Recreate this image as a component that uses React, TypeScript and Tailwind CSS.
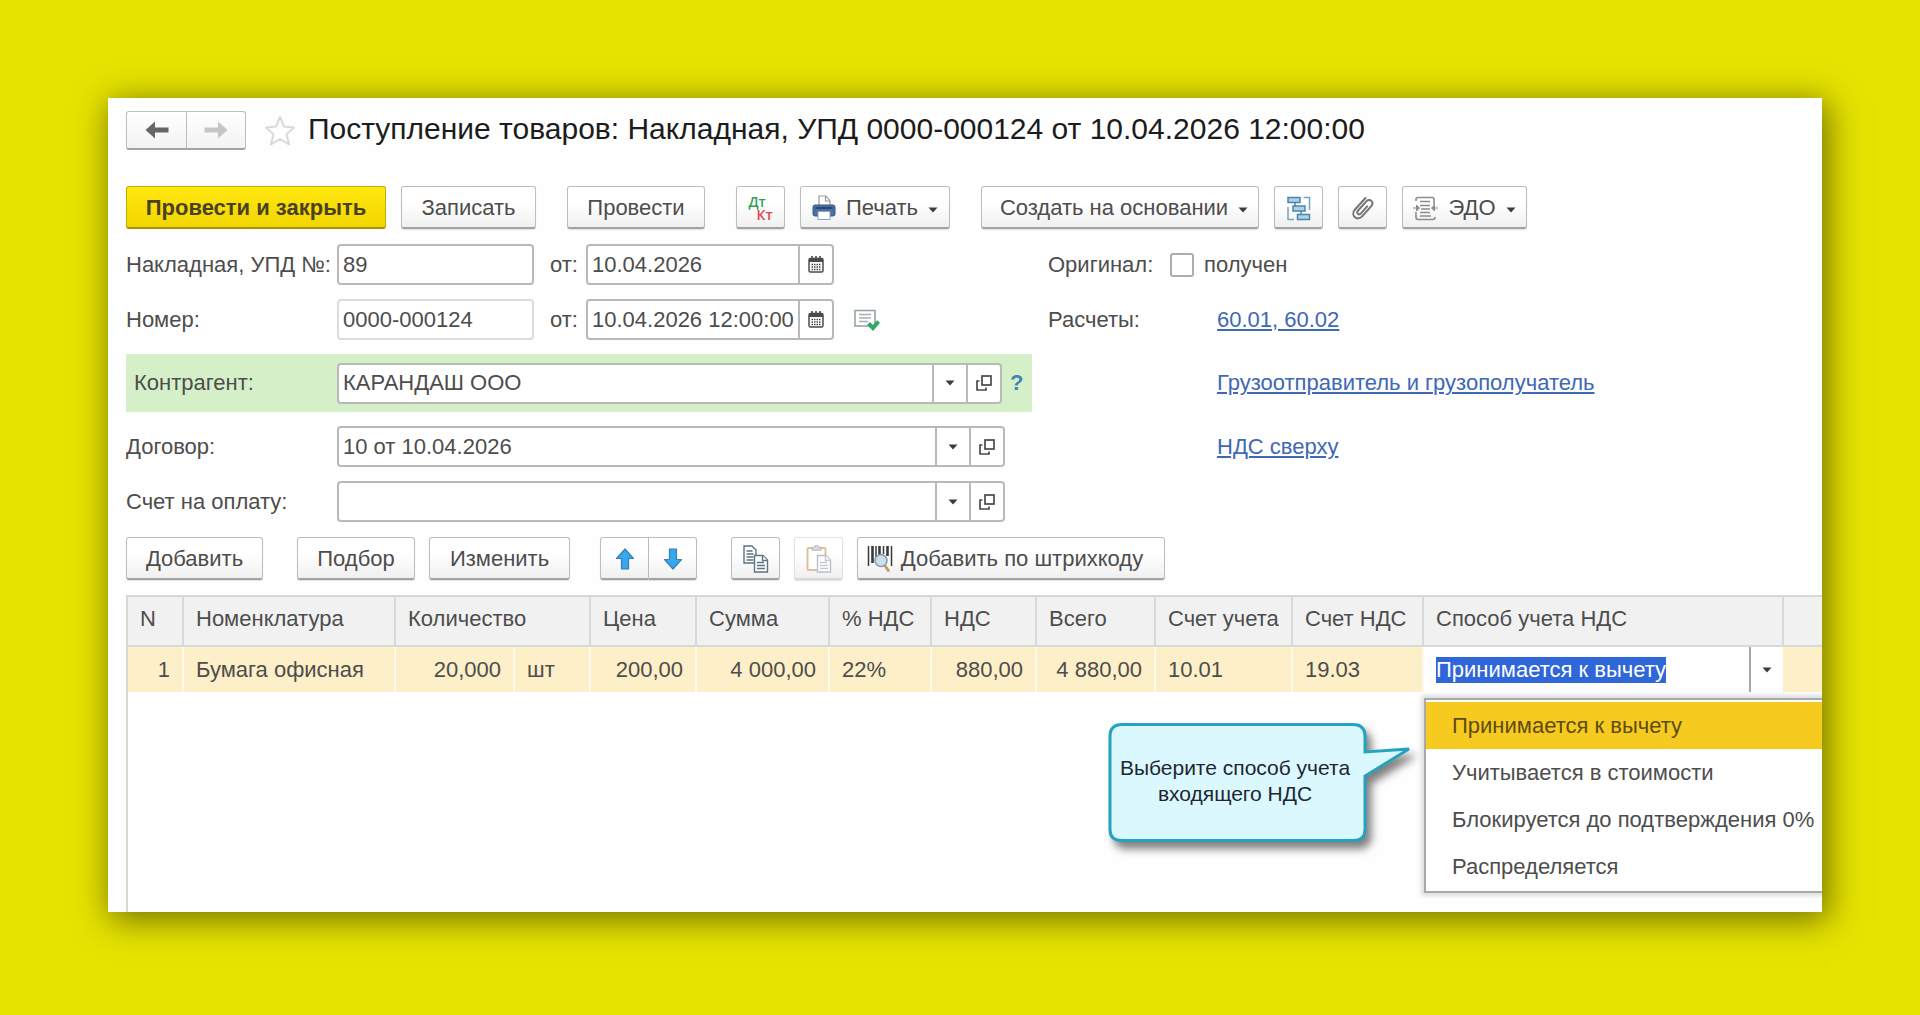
import { useEffect, useRef, type ReactNode } from "react";
import { clsx } from "clsx";

const columns = [
  { title: "N", width: "w-[55px]" },
  { title: "Номенклатура", width: "w-[212px]" },
  { title: "Количество", width: "w-[119px]", span: 2 },
  { title: "Цена", width: "w-[106px]" },
  { title: "Сумма", width: "w-[133px]" },
  { title: "% НДС", width: "w-[102px]" },
  { title: "НДС", width: "w-[105px]" },
  { title: "Всего", width: "w-[119px]" },
  { title: "Счет учета", width: "w-[137px]" },
  { title: "Счет НДС", width: "w-[131px]" },
  { title: "Способ учета НДС", width: "w-[360px]" },
  { title: "", width: "" },
];

const cells = [
  { value: "1", right: true },
  { value: "Бумага офисная" },
  { value: "20,000", right: true },
  { value: "шт" },
  { value: "200,00", right: true },
  { value: "4 000,00", right: true },
  { value: "22%" },
  { value: "880,00", right: true },
  { value: "4 880,00", right: true },
  { value: "10.01" },
  { value: "19.03" },
];

const vatMethods = [
  "Принимается к вычету",
  "Учитывается в стоимости",
  "Блокируется до подтверждения 0%",
  "Распределяется",
];

/* ---------- icons ---------- */

function Caret({ className }: { className?: string }) {
  return (
    <svg width="10" height="6" viewBox="0 0 10 6" className={clsx("shrink-0", className)} aria-hidden="true">
      <path d="M0.5 0.5h9L5 5.5z" fill="#3c3c3c" />
    </svg>
  );
}

function ArrowIcon({ right }: { right?: boolean }) {
  return (
    <svg width="24" height="18" viewBox="0 0 24 18" className={right ? "rotate-180" : ""} aria-hidden="true">
      <path d="M0.5 9L10 0.5v6h13.500v5H10v6z" fill={right ? "#c6c6c6" : "#666"} />
    </svg>
  );
}

function StarIcon() {
  return (
    <svg width="32" height="32" viewBox="0 0 32 32" aria-hidden="true">
      <path
        d="M16 2l4 9.500 10 1-7.500 6.800 2.500 10.200L16 24l-9 5.500 2.500-10.200L2 12.500l10-1z"
        fill="#fff"
        stroke="#d9d9d9"
        strokeWidth="2"
        strokeLinejoin="round"
      />
    </svg>
  );
}

function PrinterIcon() {
  return (
    <svg width="24" height="26" viewBox="0 0 24 26" aria-hidden="true">
      <path d="M7 11V1h7l4 5v5" fill="#fff" stroke="#9a9a9a" strokeWidth="1.200" />
      <path d="M13.500 1v5H18" fill="none" stroke="#9a9a9a" strokeWidth="1.200" />
      <rect x="1" y="10" width="22" height="11" rx="2" fill="#4a70a2" stroke="#34568a" />
      <rect x="3.500" y="12" width="17" height="2" fill="#2c4770" />
      <rect x="6" y="16.500" width="12" height="8" fill="#fff" stroke="#8ea3bd" />
    </svg>
  );
}

function StructureIcon() {
  return (
    <svg width="25" height="25" viewBox="0 0 25 25" fill="none" stroke="#4f83a8" strokeWidth="1.500" aria-hidden="true">
      <rect x="2" y="1.500" width="12" height="5" fill="#a9d5ec" />
      <rect x="7" y="10" width="12" height="5" fill="#a9d5ec" />
      <rect x="11.500" y="18.500" width="12" height="5" fill="#a9d5ec" />
      <path d="M9 6.500V10M15 15v3.500" />
      <path d="M17.500 1.500h6V14M2 11v12.500h6" stroke="#7aa3c0" />
    </svg>
  );
}

function ClipIcon() {
  return (
    <svg width="24" height="25" viewBox="0 0 24 25" fill="none" stroke="#757575" strokeWidth="2" strokeLinecap="round" aria-hidden="true">
      <path d="M14.500 2L4 13.500c-2.200 2.600-2.200 5.800-.3 7.600 2 1.900 5.200 1.700 7.400-.7l9-10c1.700-2 1.700-4.200.3-5.500-1.500-1.400-3.700-1.100-5.300.7l-8 8.900c-1 1.200-1 2.500-.2 3.300.9.800 2.100.6 3.100-.5l6.200-6.900" />
    </svg>
  );
}

function EdoIcon() {
  return (
    <svg width="25" height="25" viewBox="0 0 25 25" fill="none" stroke="#8c8c8c" strokeWidth="1.600" aria-hidden="true">
      <path d="M3 5V3.500C3 2 4 1.500 5 1.500h14.500c1.500 0 1.500 1 1.500 2V9M3 16v5c0 1.500 1 2.500 2 2.500h15c1.500 0 2-1 2-2.500" />
      <path d="M7 5.500h10M7 9.500h10M8 13h9M7 16.500h10M7 20h11" />
      <path d="M0 12h4M3.500 9v6l3-3zM25 12h-4M21.500 9v6l-3-3z" fill="#8c8c8c" strokeWidth="1" />
    </svg>
  );
}

function CalendarIcon() {
  return (
    <svg width="16" height="17" viewBox="0 0 16 17" aria-hidden="true">
      <rect x="1" y="2.500" width="14" height="13.500" rx="1.500" fill="#fff" stroke="#4a4a4a" strokeWidth="1.500" />
      <path d="M1 2.500h14V6H1z" fill="#4a4a4a" />
      <path d="M4 0v3M8 0v3M12 0v3" stroke="#4a4a4a" strokeWidth="1.600" />
      <path d="M3.500 8.500h9M3.500 11h9M3.500 13.500h9" stroke="#4a4a4a" strokeWidth="1.400" strokeDasharray="1.500 1" />
    </svg>
  );
}

function OpenIcon() {
  return (
    <svg width="16" height="16" viewBox="0 0 16 16" fill="none" stroke="#4a4a4a" strokeWidth="1.700" aria-hidden="true">
      <rect x="6" y="1" width="9" height="9" />
      <path d="M3.500 6H1v9h9v-2.500" />
    </svg>
  );
}

function PostedIcon() {
  return (
    <svg width="26" height="22" viewBox="0 0 26 22" fill="none" aria-hidden="true">
      <rect x="1" y="1.500" width="20" height="15.500" fill="#fff" stroke="#93a0a4" strokeWidth="1.500" />
      <path d="M5 5.500h12M5 9h12M5 12.500h9" stroke="#a5b0b4" strokeWidth="1.500" />
      <path d="M14.500 14.500l4.500 4.500 5.500-6.500" stroke="#2fa866" strokeWidth="4" />
    </svg>
  );
}

function MoveIcon({ down }: { down?: boolean }) {
  return (
    <svg width="20" height="22" viewBox="0 0 20 22" className={down ? "rotate-180" : ""} aria-hidden="true">
      <path d="M10 1l8.500 9.500H13.500V21h-7V10.500H1.500z" fill="#35a8ee" stroke="#3b7faf" strokeWidth="1.200" strokeLinejoin="round" />
    </svg>
  );
}

function CopyIcon() {
  return (
    <svg width="26" height="28" viewBox="0 0 26 28" fill="#fff" stroke="#5d7380" strokeWidth="1.400" aria-hidden="true">
      <path d="M1 1h8l4 4v13H1z" />
      <path d="M3.500 6h6M3.500 9h7M3.500 12h7M3.500 15h7" />
      <path d="M11.500 10.500h8.500l4.500 4.500v12h-13z" />
      <path d="M19.500 10.500v5h5M14 17.500h7M14 20.500h8M14 23.500h8" />
    </svg>
  );
}

function PasteIcon() {
  return (
    <svg width="26" height="28" viewBox="0 0 26 28" fill="#fff" strokeWidth="1.400" aria-hidden="true">
      <rect x="1.500" y="3" width="18" height="22" rx="1" stroke="#dcc29c" strokeWidth="2" />
      <path d="M6 5V2.500h2.500a2 2 0 014 0H15V5z" fill="#e3dfe8" stroke="#c5c0ca" />
      <path d="M11.500 10.500h8.500l4.500 4.500v12h-13z" stroke="#b9bfc4" />
      <path d="M19.500 10.500v5h5M14 17.500h7M14 20.500h8M14 23.500h8" stroke="#c4cace" />
    </svg>
  );
}

function BarcodeIcon() {
  return (
    <svg width="26" height="28" viewBox="0 0 26 28" fill="none" aria-hidden="true">
      <path d="M1.500 1v20M9 1v13M16.500 1v8M24.500 1v20" stroke="#3a3a3a" strokeWidth="1.500" />
      <path d="M5.500 1v17M12.500 1v9M20.500 1v10" stroke="#3a3a3a" strokeWidth="2.600" />
      <path d="M17.500 20l4.500 6.500" stroke="#c79a72" strokeWidth="3" />
      <circle cx="14" cy="15.500" r="6" fill="#c9dfec" stroke="#8d979d" strokeWidth="1.500" />
    </svg>
  );
}

/* ---------- controls ---------- */

type ButtonProps = {
  children: ReactNode;
  className?: string;
  label?: string;
  disabled?: boolean;
};

function ToolButton({ children, className, label, disabled }: ButtonProps) {
  return (
    <button
      type="button"
      aria-label={label}
      disabled={disabled}
      className={clsx(
        "flex h-[43px] shrink-0 items-center justify-center rounded-[3px] border border-b-2 border-[#bdbdbd] border-b-[#a3a3a3] bg-linear-to-b from-white from-40% to-[#f0f0f0] pt-0.5 whitespace-nowrap shadow-[0_1px_1px_rgba(0,0,0,0.12)]",
        className,
      )}
    >
      {children}
    </button>
  );
}

function FieldBox({ children, className }: { children: ReactNode; className?: string }) {
  return (
    <div
      className={clsx(
        "flex h-[41px] overflow-hidden rounded-[4px] border-2 bg-white",
        className,
      )}
    >
      {children}
    </div>
  );
}

function FieldInput({ id, value }: { id: string; value: string }) {
  return (
    <input
      id={id}
      defaultValue={value}
      className="h-full w-full min-w-0 flex-1 bg-transparent pl-1 outline-none"
    />
  );
}

function FieldButton({ children, label }: { children: ReactNode; label: string }) {
  return (
    <button
      type="button"
      aria-label={label}
      className="flex w-[34px] shrink-0 items-center justify-center border-l-2 border-[#b9b9b9]"
    >
      {children}
    </button>
  );
}

function PickerField({ id, value }: { id: string; value: string }) {
  return (
    <FieldBox className="min-w-0 flex-1 border-[#b9b9b9]">
      <FieldInput id={id} value={value} />
      <FieldButton label="Выбрать">
        <Caret />
      </FieldButton>
      <FieldButton label="Открыть">
        <OpenIcon />
      </FieldButton>
    </FieldBox>
  );
}

function FieldLink({ children }: { children: string }) {
  return (
    <a href="#" className="text-[#3f68b5] underline decoration-2 underline-offset-2">
      {children}
    </a>
  );
}

/* ---------- sections ---------- */

function TitleBar() {
  return (
    <div className="flex h-[39px] items-center">
      <div className="flex h-full rounded-[3px] border border-b-2 border-[#bdbdbd] border-b-[#a3a3a3] bg-linear-to-b from-white to-[#f3f3f3]">
        <button type="button" aria-label="Назад" className="flex w-[60px] items-center justify-center border-r border-[#bdbdbd]">
          <ArrowIcon />
        </button>
        <button type="button" aria-label="Вперед" disabled className="flex w-[58px] items-center justify-center">
          <ArrowIcon right />
        </button>
      </div>
      <button type="button" aria-label="В избранное" className="ml-[18px]">
        <StarIcon />
      </button>
      <h1 className="ml-3 pb-1 text-[30px] leading-9 whitespace-nowrap text-[#1c1c1c]">
        Поступление товаров: Накладная, УПД 0000-000124 от 10.04.2026 12:00:00
      </h1>
    </div>
  );
}

function CommandBar() {
  return (
    <div className="mt-9 flex gap-[15px]">
      <button
        type="button"
        className="h-[43px] w-[260px] shrink-0 rounded-[3px] border border-b-2 border-[#c4ad00] border-b-[#a89400] bg-linear-to-b from-[#ffe80f] to-[#f2d500] pt-0.5 font-bold whitespace-nowrap text-[#4a4125]"
      >
        Провести и закрыть
      </button>
      <ToolButton className="w-[135px]">Записать</ToolButton>
      <ToolButton className="ml-4 w-[138px]">Провести</ToolButton>
      <ToolButton className="ml-4 w-[49px]">
        <span className="flex flex-col font-['Open_Sans',sans-serif] text-[14px] leading-[13px] font-semibold">
          <span className="text-left text-[#2fa257]">Дт</span>
          <span className="pl-2 text-[#e04545]">Кт</span>
        </span>
      </ToolButton>
      <ToolButton className="w-[150px] gap-[10px]">
        <PrinterIcon />
        Печать
        <Caret className="mt-1" />
      </ToolButton>
      <ToolButton className="ml-4 w-[278px] gap-[10px] pl-2">
        Создать на основании
        <Caret className="mt-1" />
      </ToolButton>
      <ToolButton className="w-[49px]" label="Структура подчиненности">
        <StructureIcon />
      </ToolButton>
      <ToolButton className="w-[49px]" label="Присоединенные файлы">
        <ClipIcon />
      </ToolButton>
      <ToolButton className="w-[125px] gap-[10px]">
        <EdoIcon />
        ЭДО
        <Caret className="mt-1" />
      </ToolButton>
    </div>
  );
}

function HeaderFields() {
  return (
    <div className="mt-[15px] grid grid-cols-[906px_1fr] items-center gap-x-4 gap-y-[14px]">
      <div className="flex items-center">
        <label htmlFor="invoice" className="w-[211px] shrink-0 whitespace-nowrap">
          Накладная, УПД №:
        </label>
        <FieldBox className="w-[197px] border-[#b9b9b9]">
          <FieldInput id="invoice" value="89" />
        </FieldBox>
        <label htmlFor="invoice-date" className="w-[52px] pl-4">
          от:
        </label>
        <FieldBox className="w-[248px] border-[#b9b9b9]">
          <FieldInput id="invoice-date" value="10.04.2026" />
          <FieldButton label="Календарь">
            <CalendarIcon />
          </FieldButton>
        </FieldBox>
      </div>
      <div className="flex items-center">
        <span className="w-[122px]">Оригинал:</span>
        <label className="flex items-center gap-[10px]">
          <input type="checkbox" className="size-6 appearance-none rounded-[3px] border-2 border-[#adadad] bg-white" />
          получен
        </label>
      </div>

      <div className="flex items-center">
        <label htmlFor="number" className="w-[211px] shrink-0">
          Номер:
        </label>
        <FieldBox className="w-[197px] border-[#dcdcdc]">
          <FieldInput id="number" value="0000-000124" />
        </FieldBox>
        <label htmlFor="number-date" className="w-[52px] pl-4">
          от:
        </label>
        <FieldBox className="w-[248px] border-[#b9b9b9]">
          <FieldInput id="number-date" value="10.04.2026 12:00:00" />
          <FieldButton label="Календарь">
            <CalendarIcon />
          </FieldButton>
        </FieldBox>
        <span className="pl-5">
          <PostedIcon />
        </span>
      </div>
      <div className="flex items-center">
        <span className="w-[169px]">Расчеты:</span>
        <FieldLink>60.01, 60.02</FieldLink>
      </div>

      <div className="flex h-[58px] items-center bg-[#d5f0c8] pr-2">
        <label htmlFor="partner" className="w-[211px] shrink-0 pl-2">
          Контрагент:
        </label>
        <PickerField id="partner" value="КАРАНДАШ ООО" />
        <button type="button" className="w-[22px] pl-2 text-left font-bold text-[#3f86b5]">
          ?
        </button>
      </div>
      <div className="pl-[169px]">
        <FieldLink>Грузоотправитель и грузополучатель</FieldLink>
      </div>

      <div className="flex items-center pr-[27px]">
        <label htmlFor="contract" className="w-[211px] shrink-0">
          Договор:
        </label>
        <PickerField id="contract" value="10 от 10.04.2026" />
      </div>
      <div className="pl-[169px]">
        <FieldLink>НДС сверху</FieldLink>
      </div>

      <div className="flex items-center pr-[27px]">
        <label htmlFor="bill" className="w-[211px] shrink-0">
          Счет на оплату:
        </label>
        <PickerField id="bill" value="" />
      </div>
    </div>
  );
}

function TableBar() {
  return (
    <div className="mt-[15px] flex gap-[14px]">
      <ToolButton className="w-[137px]">Добавить</ToolButton>
      <ToolButton className="ml-5 w-[118px]">Подбор</ToolButton>
      <ToolButton className="w-[141px]">Изменить</ToolButton>
      <div className="ml-4 flex">
        <ToolButton className="w-[49px] rounded-r-none" label="Вверх">
          <MoveIcon />
        </ToolButton>
        <ToolButton className="w-12 rounded-l-none border-l-0" label="Вниз">
          <MoveIcon down />
        </ToolButton>
      </div>
      <ToolButton className="ml-5 w-[49px]" label="Копировать">
        <CopyIcon />
      </ToolButton>
      <ToolButton className="w-[49px] border-[#e2e2e2] border-b-[#d8d8d8]" label="Вставить" disabled>
        <PasteIcon />
      </ToolButton>
      <ToolButton className="w-[308px] gap-2 pr-3" >
        <BarcodeIcon />
        Добавить по штрихкоду
      </ToolButton>
    </div>
  );
}

function Callout() {
  return (
    <div className="absolute top-[76px] right-full mr-3 h-[119px] w-[304px]">
      <svg width="320" height="140" viewBox="0 0 320 140" className="absolute top-0 left-0" aria-hidden="true">
        <path
          d="M14 1.500h231q12 0 12 12V29l44-3-44 27v53.500q0 11-12 11H14q-12 0-12-11v-93q0-12 12-12z"
          fill="#dbf8ff"
          stroke="#23a3be"
          strokeWidth="3"
          className="drop-shadow-[5px_7px_4px_rgba(0,0,0,0.5)]"
        />
      </svg>
      <p className="relative w-[254px] pt-8 text-center text-[21px] leading-[26px] whitespace-pre-line text-[#1d2733]">
        {"Выберите способ учета\nвходящего НДС"}
      </p>
    </div>
  );
}

function VatMethodEditor() {
  const inputRef = useRef<HTMLInputElement>(null);

  useEffect(() => {
    inputRef.current?.focus();
    inputRef.current?.select();
  }, []);

  return (
    <div className="relative flex h-[45px] items-center bg-white">
      <input
        ref={inputRef}
        aria-label="Способ учета НДС"
        defaultValue={vatMethods[0]}
        className="h-[26px] min-w-0 flex-1 pl-3 leading-[26px] caret-transparent outline-none selection:bg-[#2f66d8] selection:text-white"
      />
      <button
        type="button"
        aria-label="Открыть список"
        className="flex h-full w-[34px] items-center justify-center border-l-2 border-[#a8a8a8]"
      >
        <Caret />
      </button>
      <ul
        role="listbox"
        aria-label="Способ учета НДС"
        className="absolute top-[51px] left-0 z-10 w-[420px] border-2 border-[#a9a9a9] bg-white pt-0.5 pb-px shadow-[0_0_4px_3px_rgba(0,0,0,0.12)]"
      >
        {vatMethods.map((method, i) => (
          <li
            key={method}
            role="option"
            aria-selected={i === 0}
            className={clsx(
              "flex h-[47px] items-center pl-[26px] whitespace-nowrap",
              i === 0 && "bg-[#f7ca1f] text-[#5c4c12]",
            )}
          >
            {method}
          </li>
        ))}
      </ul>
      <Callout />
    </div>
  );
}

function GoodsTable() {
  return (
    <div className="mt-[15px] flex-1 border-t-2 border-l-2 border-[#d9d8cf]">
      <table className="w-full table-fixed border-collapse">
        <colgroup>
          {columns.map((col, i) =>
            col.span ? [<col key="qty" className="w-[119px]" />, <col key="unit" className="w-[76px]" />] : <col key={i} className={col.width} />,
          )}
        </colgroup>
        <thead>
          <tr className="h-[49px] bg-[#f1f1f1]">
            {columns.map((col, i) => (
              <th
                key={i}
                colSpan={col.span}
                className="border-r-2 border-b-2 border-[#d9d9d9] pb-1 pl-3 text-left font-normal whitespace-nowrap last:border-r-0"
              >
                {col.title}
              </th>
            ))}
          </tr>
        </thead>
        <tbody>
          <tr className="h-[45px] bg-[#fdefc8]">
            {cells.map((cell, i) => (
              <td
                key={i}
                className={clsx(
                  "border-r-2 border-[#fef9ea] whitespace-nowrap",
                  cell.right ? "pr-3 text-right" : "pl-3",
                )}
              >
                {cell.value}
              </td>
            ))}
            <td className="p-0">
              <VatMethodEditor />
            </td>
            <td />
          </tr>
        </tbody>
      </table>
    </div>
  );
}

export default function App() {
  return (
    <div className="flex min-h-screen bg-[#e6e300] pt-[98px] pr-[98px] pb-[103px] pl-[108px] font-['Liberation_Sans',Arial,sans-serif] text-[22px] leading-7 text-[#4d4d4d]">
      <main className="flex min-w-0 flex-1 flex-col overflow-hidden bg-[#fefefe] pt-[13px] pl-[18px] shadow-[4px_6px_32px_2px_rgba(0,0,0,0.5)]">
        <TitleBar />
        <CommandBar />
        <HeaderFields />
        <TableBar />
        <GoodsTable />
      </main>
    </div>
  );
}
